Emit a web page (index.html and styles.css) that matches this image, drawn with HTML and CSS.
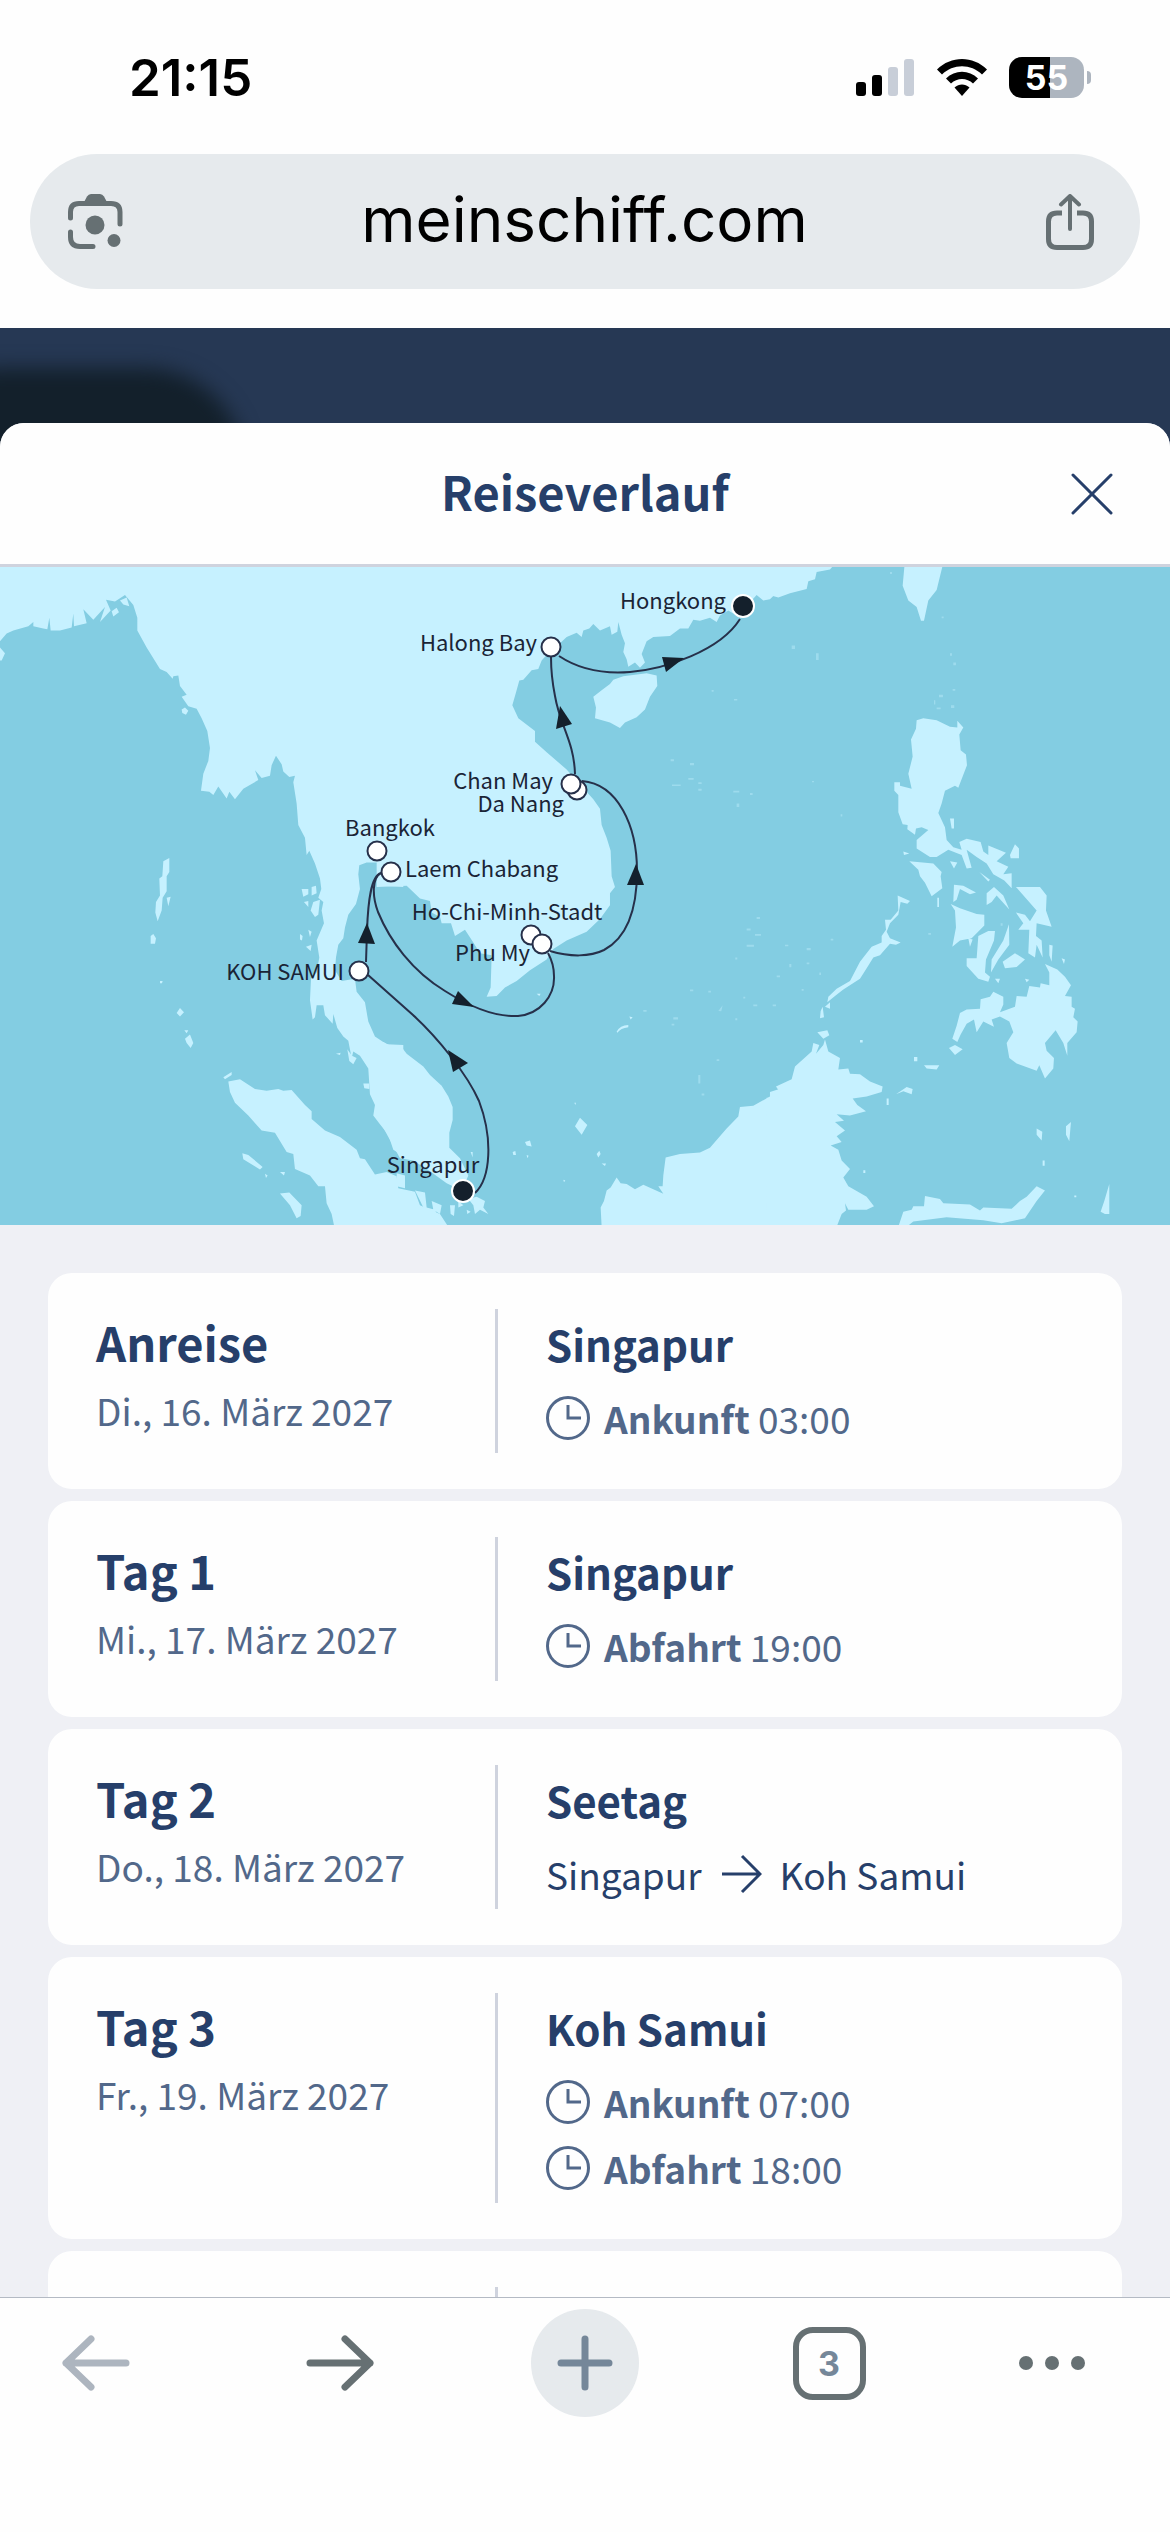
FILE: index.html
```
<!DOCTYPE html>
<html lang="de">
<head>
  <meta charset="UTF-8">
  <meta name="viewport" content="width=device-width">
  <title>Reiseverlauf</title>
  <link rel="stylesheet" href="styles.css">
</head>
<body>
  <!-- Statusleiste -->
  <div class="status">
    <span class="time">21:15</span>
    <div class="status-icons">
      <svg width="58" height="37" viewBox="0 0 58 37">
        <rect x="0" y="23" width="10" height="14" rx="3"/>
        <rect x="16" y="16" width="10" height="21" rx="3"/>
        <rect class="off" x="32" y="8" width="10" height="29" rx="3"/>
        <rect class="off" x="48" y="0" width="10" height="37" rx="3"/>
      </svg>
      <svg width="50" height="37" viewBox="0 0 50 37">
        <path d="M0 10.500C14-3.500 36-3.500 50 10.500L45 15.500C34 4.500 16 4.500 5 15.500Z"/>
        <path d="M9 19.500C18 10.500 32 10.500 41 19.500L36 24.500C30 18.500 20 18.500 14 24.500Z"/>
        <path d="M17.500 28.500C22 24.500 28 24.500 32.500 28.500L25 37Z"/>
      </svg>
      <div class="battery">55</div>
    </div>
  </div>

  <!-- Adresszeile -->
  <div class="address">
    <button class="icon-btn" aria-label="Lens">
      <svg width="55" height="55" viewBox="0 0 55 55">
        <path class="line" d="M2.500 24V18Q2.500 9.500 11 9.500H43Q52 9.500 52 18V30M2.500 38V43Q2.500 52.500 12 52.500H25"/>
        <path d="M15 10L19 2.500Q20.500 0 23 0H32Q34.500 0 36 2.500L40 10Z"/>
        <circle cx="27" cy="31" r="9.500"/>
        <circle cx="46" cy="46.500" r="6.500"/>
      </svg>
    </button>
    <button class="url">meinschiff.com</button>
    <button class="icon-btn" aria-label="Teilen">
      <svg width="48" height="56" viewBox="0 0 48 56">
        <path class="line flat" d="M16 19H11Q2.500 19 2.500 27.500V45Q2.500 53.500 11 53.500H37Q45.500 53.500 45.500 45V27.500Q45.500 19 37 19H31"/>
        <path class="line thin" d="M24 35V3M15 10.500L24 2L33 10.500"/>
      </svg>
    </button>
  </div>

  <!-- Inhalt -->
  <main class="page">
    <section class="sheet">
      <header class="sheet-head">
        <h1>Reiseverlauf</h1>
        <button class="close" aria-label="Schließen">
          <svg width="42" height="42" viewBox="0 0 42 42"><path d="M2 2L40 40M40 2L2 40"/></svg>
        </button>
      </header>

      <!-- Routenkarte -->
      <svg class="map" viewBox="0 1 1170 658" role="img" aria-label="Route">
        <rect class="sea" width="1170" height="660"/>
        <g class="land" transform="translate(0 -6) scale(.3333 .4274)">
          <!-- Golf von Bengalen, Thailand -->
          <path d="M0 0H1210V765L1145 762 1155 735 1140 708 1100 708 1078 714 1075 735 1080 770 1068 805 1045 830 1035 860 1030 885 1015 900 1008 930 1005 960 1025 985 1065 980 1070 1010 1095 1035 1105 1080 1125 1115 1160 1133 1210 1135V1395L1180 1380 1165 1345 1140 1320 1120 1300 1125 1275 1110 1250 1105 1190 1080 1160 1060 1150 1055 1165 1045 1125 1030 1115 1012 1095 1000 1062 998 1085 975 1065 970 1042 950 1042 945 1070 938 1075 930 1030 933 980 950 965 958 930 950 890 972 850 965 820 970 800 955 790 964 770 960 745 945 710 928 680 920 690 915 650 895 620 890 570 880 520 885 505 868 508 850 495 845 478 828 458 815 480 810 505 785 510 765 492 775 515 730 535 705 560 688 542 680 558 655 530 640 550 628 542 603 540 610 500 625 470 630 440 622 400 605 370 590 348 565 342 545 320 560 315 540 295 535 270 520 272 518 278 500 262 480 255 440 205 412 165 412 135 400 105 375 82 345 97 318 93 332 118 300 145 315 110 280 140 250 115 260 148 222 155 220 125 215 158 180 165 152 165 148 135 142 162 130 160 100 155 100 145 85 155 40 165 20 172 0 190Z"/>
          <path d="M0 205L15 218 5 235H0ZM545 350L555 345 565 353 558 362 547 358ZM335 120L350 112 357 122 340 132ZM360 95L380 88 388 108 370 104Z"/>
          <!-- Andamanen und Nikobaren -->
          <path d="M490 705L508 697 508 730 500 740 500 775 488 790 485 820 473 845 466 825 468 800 480 785 478 745 487 740ZM500 790L512 788 505 810ZM452 880L460 875 468 885 465 898 452 898ZM530 1060L540 1048 552 1058 540 1068ZM555 1120L570 1110 580 1130 572 1142 560 1130ZM480 985L488 985 486 990 480 990ZM553 1100L565 1100 560 1107ZM670 1210L695 1198 695 1205 675 1215Z"/>
          <!-- Mergui-Archipel -->
          <path d="M935 765L948 762 950 780 935 785ZM905 770L925 770 925 782 910 788ZM940 800L960 795 955 830 945 835 932 820ZM912 800L925 798 925 812ZM900 875L908 880 906 890 900 888ZM925 865L935 870 930 882ZM918 905L935 900 932 915ZM1042 1145L1056 1160 1070 1165 1060 1180 1048 1172ZM1008 1155L1022 1153 1020 1158ZM1090 1225L1108 1225 1108 1238 1093 1236Z"/>
          <!-- Sumatra -->
          <path d="M685 1220L720 1215 765 1238 800 1242 835 1238 850 1242 875 1240 915 1275 935 1290 935 1308 975 1335 1020 1350 1070 1380 1080 1400 1095 1402 1125 1438 1160 1432 1190 1442 1195 1470 1245 1478 1260 1510 1320 1530 1345 1560H1003L995 1530 980 1505 975 1465 955 1465 930 1440 885 1425 880 1390 860 1385 825 1340 785 1335 745 1300 705 1270 690 1245Z"/>
          <path d="M727 1388L745 1392 788 1420 780 1426 730 1402ZM840 1482L868 1480 905 1510 902 1535 890 1540 870 1510ZM840 1432L855 1432 852 1440ZM795 1436L803 1440 798 1446Z"/>
        </g>
        <g class="land" transform="translate(380 -6) scale(.3333 .4274)">
          <!-- China, Vietnam, Kambodscha -->
          <path d="M-10 0H1210V82L1180 84 1170 92 1150 95 1130 82 1085 120 1060 125 1045 118 1020 130 1010 145 990 135 960 142 940 140 925 160 900 160 870 178 820 180 800 190 785 220 795 240 780 252 765 240 745 250 740 232 730 215 735 195 725 175 715 145 712 168 695 175 690 155 660 165 640 150 628 160 610 165 605 180 590 170 560 180 540 195 520 205 485 235 475 255 455 258 430 280 418 282 408 310 397 340 415 370 465 400 465 425 500 450 560 490 600 525 640 560 660 582 665 620 680 650 692 680 695 740 705 765 690 780 690 808 660 840 620 870 560 890 520 910 500 935 450 960 410 985 375 1000 350 1020 320 1022 332 1000 335 925 300 920 280 895 255 865 225 880 213 850 185 850 180 835 155 825 150 798 120 792 80 762-10 765Z"/>
          <path d="M640 320L665 305 690 290 700 280 730 272 800 265 830 270 832 295 810 320 795 350 770 368 735 380 720 393 690 380 645 370 648 345Z"/>
          <!-- Malaiische Halbinsel -->
          <path d="M-10 1135L10 1128 30 1136 60 1135 80 1155 130 1185 150 1205 185 1230 205 1255 218 1280 218 1310 208 1340 208 1375 240 1400 265 1440 245 1475 200 1458 150 1430 100 1405 60 1400 25 1350-10 1300Z"/>
          <!-- Riau-Inseln -->
          <path d="M50 1435L75 1440 75 1470 50 1465ZM105 1475L135 1480 140 1515 165 1520 175 1540 130 1515ZM155 1500L185 1510 180 1530 160 1520ZM210 1510L225 1510 222 1535 212 1530ZM235 1500L250 1510 235 1515ZM265 1495L290 1490 315 1500 310 1515 325 1530 300 1520 285 1530 280 1510ZM260 1520L272 1525 262 1530Z"/>
          <!-- Anambas, Natuna, Spratly -->
          <path d="M585 1325L600 1305 622 1322 605 1345ZM435 1362L450 1358 455 1372 440 1370ZM398 1385L406 1383 408 1392 400 1392ZM440 1392L446 1394 442 1400ZM650 1390L658 1382 662 1390 655 1398ZM665 1412L678 1412 675 1418ZM583 1270L588 1270 586 1275ZM710 1104Q720 1088 745 1088L745 1093Q722 1095 712 1106ZM748 1068L758 1070 752 1075ZM470 1015L482 1015 478 1020ZM272 1385L278 1385 278 1398ZM550 1450L556 1452 552 1456Z"/>
          <path class="faint" d="M872 466h10v5h-10ZM876 525h26v4h-26ZM930 475h12v5h-12ZM925 510h16v4h-16ZM955 520h10v4h-10ZM955 535h10v5h-10ZM995 304h6v4h-6ZM1062 325h10v4h-10ZM1060 540h18v4h-18ZM1070 570h8v8h-8ZM1110 545h8v5h-8ZM1130 835h10v5h-10ZM1100 862h12v5h-12ZM1125 875h18v4h-18ZM1100 900h22v5h-22ZM1066 930h6v5h-6ZM930 1005h10v4h-10ZM985 1008h8v4h-8ZM1015 1055L1028 1042 1024 1056ZM880 1070h14v5h-14ZM875 1085h8v4h-8ZM790 1053h10v4h-10ZM1066 1072h6v5h-6ZM1090 1022h6v4h-6ZM1120 1040h12v4h-12ZM955 1205h6v20h-6ZM965 1248h8v5h-8ZM1010 1168h8v4h-8Z"/>
          <!-- Borneo -->
          <path d="M665 1560L662 1515 672 1500 680 1475 692 1468 710 1445 722 1458 740 1460 765 1472 790 1462 820 1472 850 1483 835 1465 848 1465 850 1440 857 1398 900 1390 960 1386 990 1375 1040 1330 1075 1302 1080 1280 1120 1277 1170 1255 1170 1245 1210 1235V1560Z"/>
        </g>
        <g class="land" transform="translate(770 -6) scale(.3333 .4274)">
          <path d="M-10 0H205L180 22 140 28 135 45 115 50 110 68 60 78 25 88-10 80Z"/>
          <path d="M405 0H522L500 70 475 95 462 142 453 142 440 110 415 95 398 60Z"/>
          <path d="M-10 1258L25 1258 32 1248 18 1232 65 1215 75 1185 125 1150 130 1130 148 1135 138 1155 160 1135 165 1122 175 1150 210 1165 205 1192 235 1190 240 1202 270 1203 300 1220 338 1232 335 1245 290 1255 248 1260 262 1275 288 1290 240 1300 200 1297 222 1312 195 1315 225 1335 200 1348 215 1362 182 1370 205 1380 215 1405 240 1425 220 1445 235 1465 290 1490 312 1512 290 1520 235 1520 225 1505 228 1522 215 1530 200 1560H-10Z"/>
          <!-- Luzon -->
          <path d="M440 375L460 370 500 375 540 390 562 392 562 376 580 392 568 408 572 445 588 455 591 480 565 533 555 528 525 540 515 570 505 592 525 625 530 655 550 672 575 678 568 660 590 652 632 660 640 682 655 690 655 668 708 685 680 705 715 718 700 735 725 733 725 768 703 750 670 735 650 710 620 695 590 678 605 720 590 722 575 690 535 678 500 695 480 695 440 675 440 655 475 632 455 625 438 628 435 643 412 630 413 620 398 618 385 590 385 550 373 540 373 520 390 520 390 528 425 535 415 500 428 460 423 420 438 395Z"/>
          <path d="M418 705L490 710 515 730 512 740 517 768 485 787 465 755 450 740 445 725ZM540 605L552 605 552 628 545 628ZM540 705L562 708 552 722ZM720 690L735 665 747 675 747 698 722 698ZM628 730L660 748 655 752ZM400 682L418 687 402 690Z"/>
          <!-- Visayas -->
          <path d="M552 760L580 762 618 778 600 782 570 770 560 795 550 800ZM650 780L672 765 700 785 718 818 680 785 665 800 650 807ZM738 765L810 765 830 785 828 820 845 858 800 850 798 880 815 890 818 930 800 900 795 930 775 920 778 865 745 865 760 850 738 825 765 830 780 845 800 820ZM542 805L570 815 620 828 643 830 643 855 605 885 570 890 547 905 558 860 555 820ZM625 880L655 868 675 868 672 890 648 935 645 965 660 975 655 987 625 980 590 950 590 932 620 932ZM595 885L608 888 600 905ZM665 935L700 890 717 852 718 900 685 935 663 965ZM698 940L735 920 765 935 740 952 705 955ZM838 900L848 902 845 940 838 925ZM875 932L885 935 882 945ZM675 980L690 980 685 990ZM765 980L778 982 770 988Z"/>
          <!-- Mindanao -->
          <path d="M825 945L862 958 885 975 903 995 885 1020 905 1022 905 1045 915 1050 910 1070 923 1080 920 1105 892 1130 892 1160 880 1130 857 1100 825 1130 830 1148 852 1165 850 1190 825 1213 808 1182 800 1195 740 1178 718 1165 710 1130 730 1105 718 1080 690 1068 665 1075 672 1092 640 1080 620 1105 612 1075 590 1085 572 1110 562 1128 547 1120 560 1090 570 1060 590 1052 630 1050 632 1028 660 1022 670 1010 700 1022 700 1040 690 1058 735 1045 740 1020 770 1022 778 997 810 1000 812 990 838 995 838 965Z"/>
          <path d="M537 1142L555 1135 578 1145 555 1158ZM462 1182L508 1182 500 1192 470 1190ZM432 1163h10v10h-10ZM378 1250L410 1233 428 1238 425 1250 400 1243ZM350 1260h6v15h-6ZM270 1123h8v6h-8Z"/>
          <!-- Palawan -->
          <path d="M383 785L420 798 412 804 392 800 385 830 360 850 350 870 360 885 392 895 378 900 360 898 330 925 310 930 290 955 270 980 220 1005 195 1020 172 1035 175 1022 200 1003 240 985 270 940 305 905 335 895 335 880 348 865 345 842 362 842 385 820ZM152 1055L158 1045 162 1070 150 1072ZM165 1045L180 1035 180 1050ZM142 1105L172 1100 178 1112 160 1120ZM502 790h5v22h-5Z"/>
          <path d="M800 1330L817 1338 815 1358 800 1345ZM888 1325L903 1315 898 1360 888 1345ZM818 1405h6v12h-6ZM1018 1460V1530H1005L992 1525 1003 1500ZM280 1428h6v6h-6ZM913 1487h6v4h-6Z"/>
          <!-- Sulawesi -->
          <path d="M385 1560L400 1525 425 1520 430 1512 462 1512 465 1488 510 1495 520 1505 600 1508 630 1522 640 1515 725 1518 750 1500 770 1490 800 1465 825 1475 800 1500 765 1540 695 1552 640 1545 530 1538 430 1548 410 1560Z"/>
          <path class="faint" d="M65 200h10v8h-10ZM138 218h8v16h-8ZM540 218h6v6h-6ZM550 240h8v6h-8ZM507 315h12v6h-12ZM548 302h8v4h-8ZM543 340h10v6h-10ZM500 345h12v4h-12ZM492 328h4v10h-4ZM360 28h6v5h-6ZM515 132h6v4h-6ZM126 517h6v3h-6ZM212 595h5v5h-5ZM45 900h10v4h-10ZM110 908h12v5h-12ZM58 945h6v8h-6ZM110 942h8v4h-8ZM20 972h10v4h-10ZM148 965h5v6h-5ZM95 1004h6v4h-6ZM8 1040h10v4h-10ZM475 873h8v4h-8ZM182 886h8v4h-8ZM692 850h6v6h-6Z"/>
        </g>

        <g class="route">
          <path d="M475 627C491 612 493 572 479 535C467 508 438 472 413 449L368 409"/>
          <path d="M366 396L367 365C368 335 371 310 381 307"/>
          <path d="M381 307C372 312 372 330 378 346C390 375 412 405 445 425C475 444 500 451 518 450C540 448 555 430 554 410Q554 398 548 387"/>
          <path d="M550 385C570 391 590 391 604 384C630 370 637 338 637 305C637 260 618 218 582 215"/>
          <path d="M575 208C574 175 560 160 555 130Q551 110 551 91"/>
          <path d="M559 90C580 104 605 108 630 106C665 103 720 85 740 53"/>
        </g>
        <g class="arrows">
          <path d="M448 484L468 497 453 506Z"/>
          <path d="M367 357L358 377 375 378Z"/>
          <path d="M474 441L458 425 452 438Z"/>
          <path d="M636 298L627 319 644 319Z"/>
          <path d="M560 140L556 163 572 158Z"/>
          <path d="M684 92L662 91 666 106Z"/>
        </g>
        <g class="ports">
          <circle cx="377" cy="285" r="9.500"/>
          <circle cx="391" cy="306" r="9.500"/>
          <circle cx="359" cy="405" r="9.500"/>
          <circle cx="531" cy="369" r="9.500"/>
          <circle cx="542" cy="378" r="9.500"/>
          <circle cx="577" cy="224" r="9.500"/>
          <circle cx="571" cy="218" r="9.500"/>
          <circle cx="551" cy="81" r="9.500"/>
          <circle class="end" cx="743" cy="40" r="11"/>
          <circle class="end" cx="463" cy="625" r="11"/>
        </g>
        <g class="names">
          <text x="726" y="43" text-anchor="end">Hongkong</text>
          <text x="537" y="85" text-anchor="end">Halong Bay</text>
          <text x="553" y="223" text-anchor="end">Chan May</text>
          <text x="564" y="246" text-anchor="end">Da Nang</text>
          <text x="390" y="270" text-anchor="middle">Bangkok</text>
          <text x="405" y="311">Laem Chabang</text>
          <text x="507" y="354" text-anchor="middle">Ho-Chi-Minh-Stadt</text>
          <text x="530" y="395" text-anchor="end">Phu My</text>
          <text x="344" y="414" text-anchor="end">KOH SAMUI</text>
          <text x="433" y="607" text-anchor="middle">Singapur</text>
        </g>
      </svg>

      <svg class="defs" width="0" height="0">
        <symbol id="clock" viewBox="0 0 44 44">
          <circle cx="22" cy="22" r="20.500"/>
          <path d="M22 9V22H35"/>
        </symbol>
      </svg>

      <!-- Tage -->
      <div class="days">
        <article class="day">
          <div class="date">
            <h2>Anreise</h2>
            <p>Di., 16. März 2027</p>
          </div>
          <div class="stop">
            <h3>Singapur</h3>
            <p class="when"><svg><use href="#clock"/></svg><span><b>Ankunft</b> 03:00</span></p>
          </div>
        </article>
        <article class="day">
          <div class="date">
            <h2>Tag 1</h2>
            <p>Mi., 17. März 2027</p>
          </div>
          <div class="stop">
            <h3>Singapur</h3>
            <p class="when"><svg><use href="#clock"/></svg><span><b>Abfahrt</b> 19:00</span></p>
          </div>
        </article>
        <article class="day">
          <div class="date">
            <h2>Tag 2</h2>
            <p>Do., 18. März 2027</p>
          </div>
          <div class="stop">
            <h3>Seetag</h3>
            <p class="leg">Singapur <svg width="42" height="42" viewBox="0 0 42 42"><path d="M2 21H40M22 3L40 21L22 39"/></svg> Koh Samui</p>
          </div>
        </article>
        <article class="day">
          <div class="date">
            <h2>Tag 3</h2>
            <p>Fr., 19. März 2027</p>
          </div>
          <div class="stop">
            <h3>Koh Samui</h3>
            <p class="when"><svg><use href="#clock"/></svg><span><b>Ankunft</b> 07:00</span></p>
            <p class="when"><svg><use href="#clock"/></svg><span><b>Abfahrt</b> 18:00</span></p>
          </div>
        </article>
        <article class="day">
          <div class="date"></div>
          <div class="stop"></div>
        </article>
      </div>
    </section>
  </main>

  <!-- Werkzeugleiste -->
  <nav class="toolbar">
    <button class="back" aria-label="Zurück">
      <svg width="68" height="56" viewBox="0 0 68 56"><path d="M64 28H4M29 4L4 28L29 52"/></svg>
    </button>
    <button class="forward" aria-label="Vorwärts">
      <svg width="68" height="56" viewBox="0 0 68 56"><path d="M4 28H64M39 4L64 28L39 52"/></svg>
    </button>
    <button class="new-tab" aria-label="Neuer Tab">
      <svg width="56" height="56" viewBox="0 0 56 56"><path d="M28 4V52M4 28H52"/></svg>
    </button>
    <button class="tabs">3</button>
    <button class="more" aria-label="Mehr">
      <svg width="66" height="14" viewBox="0 0 66 14"><circle cx="7" cy="7" r="7"/><circle cx="33" cy="7" r="7"/><circle cx="59" cy="7" r="7"/></svg>
    </button>
  </nav>
</body>
</html>
```
FILE: styles.css
```
* {
  box-sizing: border-box;
}
body {
  margin: 0;
  height: 100vh;
  display: flex;
  flex-direction: column;
  overflow: hidden;
  background: #fefefe;
  color: #263f6a;
  font-family: "Noto Sans CJK SC", "Noto Sans", sans-serif;
}
h1, h2, h3, p {
  margin: 0;
}
h1, h2, h3 {
  font-weight: 700;
}
button {
  padding: 0;
  border: none;
  background: none;
  color: inherit;
  font: inherit;
  cursor: pointer;
}
svg {
  display: block;
  flex: none;
}
.defs {
  position: absolute;
}

/* Statusleiste */
.status {
  flex: none;
  display: flex;
  justify-content: space-between;
  align-items: center;
  height: 154px;
  padding: 0 79px 0 129px;
  color: #000;
  font-family: Inter, "Liberation Sans", sans-serif;
}
.time {
  font-size: 51px;
  font-weight: 600;
}
.status-icons {
  display: flex;
  align-items: center;
  gap: 22px;
}
.status-icons .off {
  fill: #c8ced8;
}
.status-icons svg + svg {
  margin-left: 1px;
}
.battery {
  position: relative;
  width: 75px;
  height: 41px;
  margin-right: 7px;
  border-radius: 13px;
  background: linear-gradient(90deg, #000 55%, #adb5bf 55%);
  color: #fff;
  font-size: 34px;
  font-weight: 700;
  line-height: 41px;
  text-align: center;
}
.battery::after {
  content: "";
  position: absolute;
  top: 14px;
  right: -7px;
  width: 4px;
  height: 13px;
  border-radius: 0 4px 4px 0;
  background: #adb5bf;
}

/* Adresszeile */
.address {
  flex: none;
  display: flex;
  align-items: center;
  height: 135px;
  margin: 0 30px 39px;
  padding: 0 46px 0 38px;
  border-radius: 68px;
  background: #e6eaed;
}
.url {
  flex: 1;
  padding-bottom: 4px;
  color: #000;
  font-family: Inter, "Liberation Sans", sans-serif;
  font-size: 62px;
  line-height: 80px;
}
.icon-btn svg {
  fill: #667073;
}
.icon-btn .line {
  fill: none;
  stroke: #667073;
  stroke-width: 5;
  stroke-linecap: round;
  stroke-linejoin: round;
}
.icon-btn .flat {
  stroke-linecap: butt;
}
.icon-btn .thin {
  stroke-width: 4;
}

/* Inhalt */
.page {
  position: relative;
  flex: 1;
  min-height: 0;
  overflow: hidden;
  padding-top: 95px;
  background: #263854;
}
.page::before {
  content: "";
  position: absolute;
  top: 40px;
  left: -60px;
  width: 305px;
  height: 160px;
  border-radius: 60px 100px 0 0;
  background: #13202b;
  filter: blur(10px);
}
.sheet {
  position: relative;
  overflow: hidden;
  border-radius: 24px 24px 0 0;
  background: #eff0f5;
}
.sheet-head {
  display: grid;
  grid-template-columns: 1fr auto 1fr;
  align-items: center;
  height: 144px;
  padding: 0 57px;
  border-bottom: 3px solid #cfd3de;
  background: #fefefe;
}
.sheet-head h1 {
  grid-column: 2;
  padding-bottom: 6px;
  font-size: 47px;
  line-height: 72px;
}
.close {
  justify-self: end;
}
.close svg {
  fill: none;
  stroke: #263f6a;
  stroke-width: 3;
  stroke-linecap: round;
}

/* Karte */
.map {
  width: 100%;
  height: auto;
}
.sea {
  fill: #83cde2;
}
.land {
  fill: #c6f1ff;
}
.faint {
  opacity: 0.4;
}
.route {
  fill: none;
  stroke: #26304a;
  stroke-width: 2;
}
.arrows {
  fill: #14202c;
}
.ports {
  fill: #fff;
  stroke: #26304a;
  stroke-width: 2;
}
.ports .end {
  fill: #14202c;
  stroke: #fff;
}
.names {
  fill: #1a2436;
  font-size: 22px;
}

/* Tage */
.days {
  display: flex;
  flex-direction: column;
  gap: 12px;
  padding: 48px;
}
.day {
  display: grid;
  grid-template-columns: 399px 1fr;
  min-height: 216px;
  padding: 36px 48px;
  border-radius: 24px;
  background: #fefefe;
}
.date h2 {
  font-size: 47px;
  line-height: 66px;
}
.date p {
  color: #52688a;
  font-size: 37px;
  line-height: 70px;
}
.stop {
  padding: 0 0 2px 48px;
  border-left: 3px solid #cfd3de;
}
.stop h3 {
  margin-bottom: 6px;
  font-size: 42px;
  line-height: 70px;
}
.when, .leg {
  display: flex;
  align-items: center;
  font-size: 37px;
  line-height: 66px;
}
.when {
  gap: 14px;
  color: #52688a;
}
.when b {
  font-weight: 700;
}
.when svg {
  width: 44px;
  height: 44px;
  fill: none;
  stroke: #52688a;
  stroke-width: 3;
}
.leg {
  gap: 18px;
}
.leg svg {
  fill: none;
  stroke: #263f6a;
  stroke-width: 3;
}

/* Werkzeugleiste */
.toolbar {
  flex: none;
  display: flex;
  justify-content: space-between;
  align-items: flex-start;
  height: 235px;
  padding: 11px 85px 0 62px;
  border-top: 1px solid #b4bac4;
  background: #fefefe;
}
.toolbar button {
  display: flex;
  align-items: center;
  height: 108px;
}
.toolbar svg {
  fill: none;
  stroke: #667073;
  stroke-width: 7;
  stroke-linecap: round;
  stroke-linejoin: round;
}
.toolbar .back {
  width: 90px;
}
.toolbar .back svg {
  stroke: #adb5bf;
}
.toolbar .forward {
  width: 72px;
}
.toolbar .new-tab {
  justify-content: center;
  width: 108px;
  border-radius: 50%;
  background: #e6eaed;
}
.toolbar .new-tab svg {
  stroke: #758799;
}
.toolbar .tabs {
  justify-content: center;
  width: 73px;
  height: 73px;
  margin-top: 18px;
  border: 6px solid #667073;
  border-radius: 20px;
  color: #758799;
  font-family: Inter, "Liberation Sans", sans-serif;
  font-size: 34px;
  font-weight: 700;
}
.toolbar .more svg {
  fill: #667073;
  stroke: none;
}
```
